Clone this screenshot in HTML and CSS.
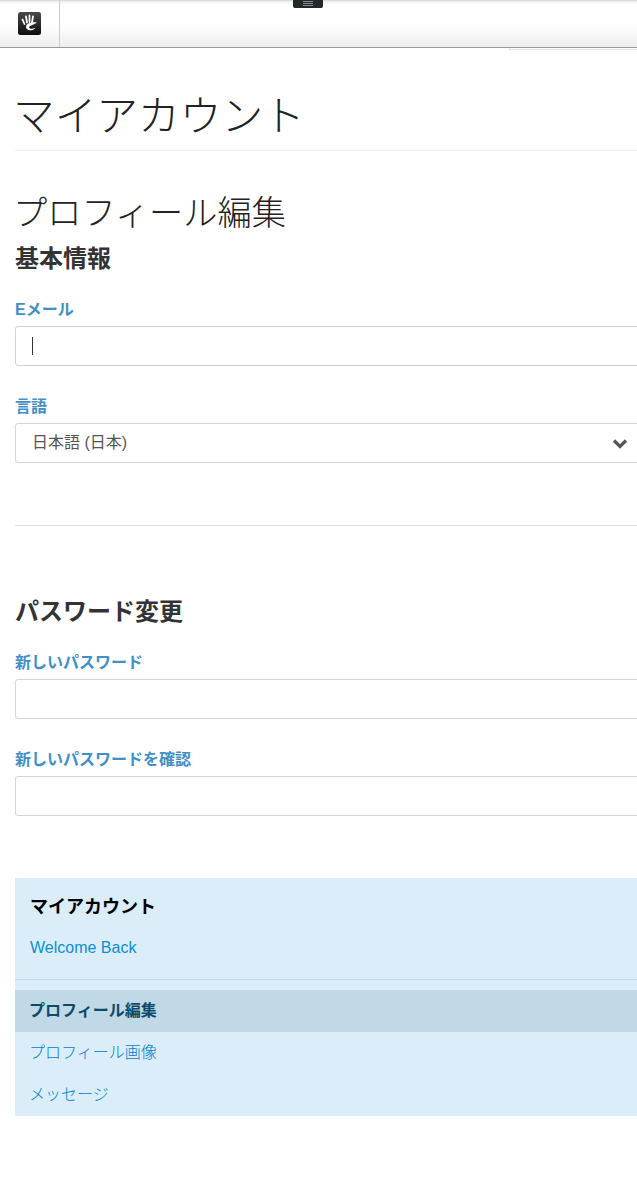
FILE: index.html
```html
<!DOCTYPE html>
<html lang="ja">
<head>
<meta charset="utf-8">
<title>マイアカウント</title>
<link rel="stylesheet" href="styles.css">
</head>
<body>
<header class="toolbar">
  <div class="logo-cell">
    <svg class="logo" width="23" height="23" viewBox="0 0 23 23" aria-hidden="true">
      <defs><linearGradient id="lg" x1="0" y1="0" x2="0" y2="1"><stop offset="0" stop-color="#4a4a4a"/><stop offset="1" stop-color="#0e0e0e"/></linearGradient></defs>
      <rect width="23" height="23" rx="2.5" fill="url(#lg)"/>
      <path d="M4.5 7.5l2 4.5M8 4.5l1 6M11.5 3.5v6.5M15 4.5l-1 6" stroke="#fff" stroke-width="1.8" stroke-linecap="round" fill="none"/>
      <path d="M19 10.5c-3.5-.4-9.6 0-10.8 3.3-.9 2.8 1.9 5 5 4.5 1.9-.3 3.4-1.2 4.2-2.5-1.5.8-3.4 1.2-4.8.9-1.2-.3-1.7-1.2-1.2-2 .9-1.2 4.2-1.8 7.6-4.2z" fill="#fff"/>
    </svg>
  </div>
  <div class="handle"><span></span><span></span><span></span></div>
</header>
<div class="tabs-hint"></div>
<main class="page">
  <h1 class="page-title">マイアカウント</h1>
  <h2 class="section-title">プロフィール編集</h2>
  <h3 class="group-title">基本情報</h3>
  <div class="field first-field">
    <label class="label">Eメール</label>
    <div class="input focus"><i class="caret"></i></div>
  </div>
  <div class="field">
    <label class="label">言語</label>
    <div class="input select">日本語 (日本)
      <svg class="chev" width="16" height="11" viewBox="0 0 16 11" aria-hidden="true"><path d="M2 2.5l6 6 6-6" fill="none" stroke="#555" stroke-width="3.2"/></svg>
    </div>
  </div>
  <hr class="rule">
  <h3 class="group-title pw-title">パスワード変更</h3>
  <div class="field first-field">
    <label class="label">新しいパスワード</label>
    <div class="input"></div>
  </div>
  <div class="field">
    <label class="label">新しいパスワードを確認</label>
    <div class="input"></div>
  </div>
  <nav class="side">
    <div class="side-head">
      <div class="side-title">マイアカウント</div>
      <a class="side-link welcome">Welcome Back</a>
    </div>
    <ul class="side-list">
      <li class="active">プロフィール編集</li>
      <li>プロフィール画像</li>
      <li>メッセージ</li>
    </ul>
  </nav>
</main>
</body>
</html>
```
FILE: styles.css
```css
* { box-sizing: border-box; }
html, body { margin: 0; padding: 0; overflow-x: hidden; background: #fff; }
body {
  width: 637px;
  min-height: 1180px;
  font-family: "Liberation Sans", "Noto Sans CJK JP", sans-serif;
  color: #333;
  overflow: hidden;
}
.toolbar {
  position: relative;
  height: 48px;
  display: flex;
  background: linear-gradient(to bottom, #d4d4d4 0, #f6f6f6 2px, #fff 5px, #fff 24px, #eeeeee 47px);
  border-bottom: 1px solid #999;
}
.logo-cell {
  width: 60px;
  height: 47px;
  border-right: 1px solid #ccc;
  display: flex;
  align-items: center;
  justify-content: center;
  padding-right: 1px;
}
.logo { display: block; }
.handle {
  position: absolute;
  left: 293px;
  top: 0;
  width: 30px;
  height: 8px;
  background: #23282b;
  border-radius: 0 0 2px 2px;
  display: flex;
  flex-direction: column;
  align-items: center;
  gap: 1px;
  padding-top: 1px;
}
.handle span { width: 10px; height: 1px; background: #8a8d8f; }
.tabs-hint {
  height: 2px;
  margin-left: 509px;
  border: 1px solid #e4e4e4;
  border-top: 0;
  width: 200px;
}
.page { width: 760px; padding: 0 0 0 15px; }
.page-title {
  margin: 0;
  padding-top: 40px;
  height: 101px;
  font-size: 41.7px;
  line-height: 54px;
  font-weight: 300;
  color: #222;
  text-indent: -2px;
  border-bottom: 1px solid #eee;
}
.section-title {
  margin: 37px 0 0;
  font-size: 34.2px;
  line-height: 50px;
  font-weight: 300;
  color: #222;
  text-indent: -2px;
}
.group-title {
  margin: 5px 0 0;
  font-size: 24px;
  line-height: 32px;
  font-weight: 700;
}
.field { margin-top: 29px; }
.first-field { margin-top: 23px; }
.label {
  display: block;
  font-size: 16px;
  line-height: 24px;
  font-weight: 700;
  color: #428fc4;
  margin-bottom: 4px;
}
.input {
  position: relative;
  height: 40px;
  border: 1px solid #d5d5d5;
  border-radius: 3px;
  background: #fff;
  padding: 0 16px;
  font-size: 16px;
  line-height: 37px;
  color: #555;
}
.focus { border-color: #cbd5dd; }
.caret { display: block; width: 1px; height: 18px; margin-top: 10px; background: #333; }
.chev { position: absolute; left: 596px; top: 14px; }
.rule { margin: 62px 0 0; border: 0; border-top: 1px solid #dde3e6; }
.pw-title { margin-top: 70px; }
.side { margin-top: 62px; background: #dcedfa; height: 238px; }
.side-head { padding: 16px 15px 0; height: 102px; border-bottom: 1px solid #c3d8e6; }
.side-title { font-size: 18px; line-height: 27px; font-weight: 700; color: #000; }
.side-link { display: block; margin-top: 16px; font-size: 16px; line-height: 22px; color: #0e8ed0; }
.side-list { list-style: none; margin: 10px 0 0; padding: 0; }
.side-list li {
  height: 42px;
  padding-left: 14px;
  font-size: 16px;
  font-weight: 300;
  line-height: 41px;
  color: #007fc9;
}
.side-list li.active { background: #c1d8e7; color: #0d4a68; font-weight: 700; }
```
